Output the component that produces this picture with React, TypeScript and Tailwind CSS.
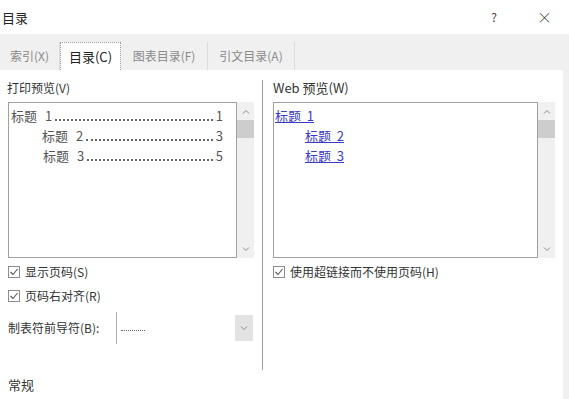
import React from 'react';

const font = { fontFamily: '"Noto Sans CJK SC", "Noto Sans", sans-serif' };

const Chevron: React.FC<{ up?: boolean; className?: string }> = ({ up, className }) => (
  <svg width="8" height="5" viewBox="0 0 8 5" className={className}>
    <path d={up ? 'M1 4.5 L4 1.5 L7 4.5' : 'M1 0.5 L4 3.5 L7 0.5'} fill="none" stroke="#8a8a8a" strokeWidth="1" />
  </svg>
);

const Check: React.FC = () => (
  <span className="w-[12px] h-[12px] border border-[#8c8c8c] bg-white flex items-center justify-center shrink-0">
    <svg width="10" height="10" viewBox="0 0 10 10">
      <path d="M1.5 5 L4 7.5 L8.5 2" fill="none" stroke="#555" strokeWidth="1.1" />
    </svg>
  </span>
);

const ScrollBar: React.FC = () => (
  <div className="w-[17px] h-[156px] bg-[#f0f0f0] flex flex-col items-center">
    <div className="h-[18px] flex items-center justify-center">
      <Chevron up />
    </div>
    <div className="w-[17px] h-[18px] bg-[#cdcdcd]" />
    <div className="flex-1" />
    <div className="h-[18px] flex items-center justify-center">
      <Chevron />
    </div>
  </div>
);

// one line of the print preview: heading, dotted leader, page number
const Leader: React.FC<{ num: string; level: string; indent: string }> = ({ num, level, indent }) => (
  <div className={`flex items-end h-[20px] text-[13px] text-[#555] ${indent}`}>
    <span className="whitespace-nowrap">标题</span>
    <span className="ml-[8px]">{level}</span>
    <span className="flex-1 mx-[3px] mb-[4px] border-b-2 border-dotted border-[#666]" />
    <span>{num}</span>
  </div>
);

const tabs = [
  { label: '索引(X)', w: 'w-[60px]' },
  { label: '目录(C)', w: 'w-[61px]', active: true },
  { label: '图表目录(F)', w: 'w-[87px]' },
  { label: '引文目录(A)', w: 'w-[87px]' },
];

export default function App() {
  return (
    <div className="w-[569px] h-[399px] overflow-hidden bg-[#f0f0f0] flex flex-col" style={font}>
      {/* Title bar */}
      <div className="h-[34px] bg-white flex items-center text-[13px] text-[#222]">
        <span className="pl-[2px] pt-[2px]">目录</span>
        <span className="ml-auto mr-[40px] text-[12px] text-[#444]">?</span>
        <span className="mr-[17px] text-[15px] text-[#444] font-light">×</span>
      </div>

      {/* Tabs */}
      <div className="h-[36px] flex items-end text-[12px]">
        {tabs.map((t) =>
          t.active ? (
            <div
              key={t.label}
              className={`${t.w} h-[28px] bg-white border-t border-l border-r border-dotted border-[#9a9a9a] flex items-center justify-center text-[#222] text-[13px]`}
            >
              {t.label}
            </div>
          ) : (
            <div
              key={t.label}
              className={`${t.w} h-[28px] border-r border-[#dcdcdc] flex items-center justify-center text-[#8a8a8a]`}
            >
              {t.label}
            </div>
          )
        )}
      </div>

      {/* Content */}
      <div className="w-[563px] flex-1 bg-white flex text-[12px] text-[#333]">
        {/* Left column */}
        <div className="w-[262px] pl-[8px] flex flex-col">
          <div className="h-[32px] flex items-end pb-[5px] -ml-[1px]">打印预览(V)</div>
          <div className="flex">
            <div className="w-[229px] h-[156px] border border-[#a0a0a0] pt-[2px] pl-[2px] pr-[13px]">
              <Leader level="1" num="1" indent="" />
              <Leader level="2" num="3" indent="pl-[31px]" />
              <Leader level="3" num="5" indent="pl-[32px]" />
            </div>
            <ScrollBar />
          </div>
          <div className="h-[25px] flex items-center gap-[5px] pt-[2px]">
            <Check />
            <span>显示页码(S)</span>
          </div>
          <div className="h-[25px] flex items-center gap-[5px]">
            <Check />
            <span>页码右对齐(R)</span>
          </div>
          <div className="h-[34px] mt-[3px] flex items-center">
            <span className="w-[108px]">制表符前导符(B):</span>
            <div className="w-[137px] h-[32px] flex items-center border-l border-[#b0b0b0]">
              <span className="ml-[4px] w-[24px] mt-[4px] border-b border-dotted border-[#666]" />
              <div className="ml-auto w-[18px] h-[26px] bg-[#e3e3e3] flex items-center justify-center">
                <Chevron />
              </div>
            </div>
          </div>
          <div className="flex-1" />
          <div className="h-[28px] pt-[4px] text-[13px]">常规</div>
        </div>

        {/* Right column */}
        <div className="flex-1 flex flex-col">
          <div className="flex pt-[10px] pb-[29px] flex-1">
            <div className="w-px bg-[#9c9c9c]" />
            <div className="pl-[10px] flex flex-col">
              <div className="h-[22px] flex items-end pb-[5px] text-[13px]">Web 预览(W)</div>
              <div className="flex">
                <div className="w-[265px] h-[156px] border border-[#a0a0a0] pt-[2px] pl-[1px] text-[13px] text-[#3a3ac8]">
                  <div className="h-[20px] flex items-end">
                    <span className="underline">标题&nbsp;&nbsp;1</span>
                  </div>
                  <div className="h-[20px] flex items-end pl-[30px]">
                    <span className="underline">标题&nbsp;&nbsp;2</span>
                  </div>
                  <div className="h-[20px] flex items-end pl-[30px]">
                    <span className="underline">标题&nbsp;&nbsp;3</span>
                  </div>
                </div>
                <ScrollBar />
              </div>
              <div className="h-[25px] flex items-center gap-[5px] pt-[2px]">
                <Check />
                <span>使用超链接而不使用页码(H)</span>
              </div>
            </div>
          </div>
        </div>
      </div>
    </div>
  );
}
